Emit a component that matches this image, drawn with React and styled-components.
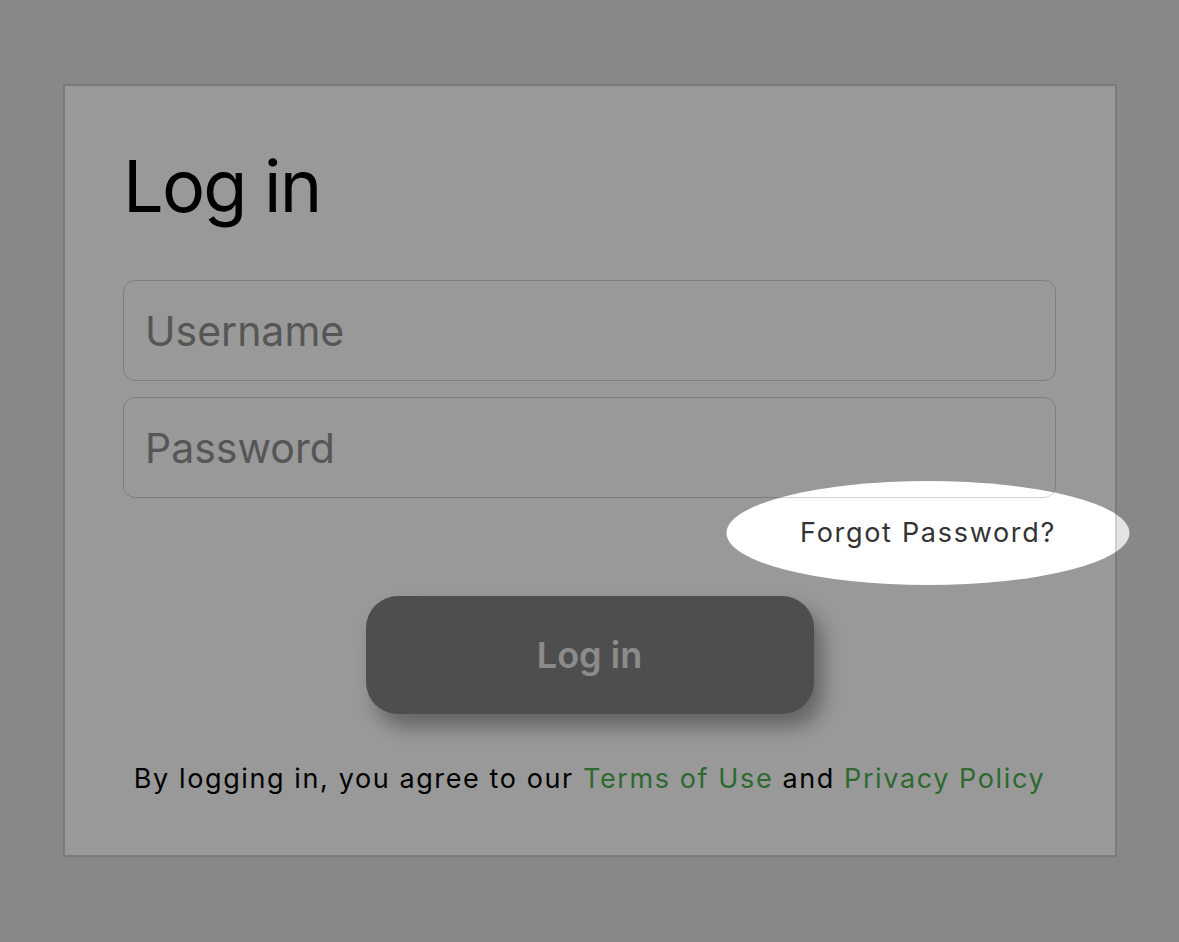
import React from 'react';
import styled, { createGlobalStyle } from 'styled-components';

const GlobalStyle = createGlobalStyle`
  html, body {
    margin: 0;
    padding: 0;
    background-color: #e3e3e3;
    font-family: Inter, "Liberation Sans", sans-serif;
    overflow: hidden;
  }
`;

const Page = styled.div`
  width: 1179px;
  height: 942px;
  padding-top: 84px;
  padding-left: 63px;
  box-sizing: border-box;
`;

const Card = styled.div`
  width: 1054px;
  height: 773px;
  box-sizing: border-box;
  background-color: #ffffff;
  border: 2px solid #cdcdcd;
  padding: 0 59px 0 58px;
  display: flex;
  flex-direction: column;
`;

const Title = styled.h1`
  margin: 64px 0 0;
  font-size: 72px;
  font-weight: 400;
  line-height: 1;
  color: #000;
  letter-spacing: -1.8px;
`;

const Fields = styled.div`
  margin-top: 58px;
  display: flex;
  flex-direction: column;
  gap: 16px;
`;

const Input = styled.input`
  height: 101px;
  box-sizing: border-box;
  border: 1px solid #d2d2d2;
  border-radius: 12px;
  padding: 0 21px;
  font-family: Inter, "Liberation Sans", sans-serif;
  font-size: 41px;
  color: #222;
  background: transparent;
  outline: none;

  &::placeholder {
    color: #909090;
  }
`;

const ForgotRow = styled.div`
  display: flex;
  justify-content: flex-end;
  margin-top: 18px;
`;

const ForgotLink = styled.a`
  position: relative;
  font-size: 27px;
  line-height: 34px;
  letter-spacing: 1.7px;
  color: #333;
  text-decoration: none;

  &::before {
    content: '';
    position: absolute;
    left: 50%;
    top: 50%;
    width: 403px;
    height: 104px;
    transform: translate(-50%, -50%);
    border-radius: 50%;
    box-shadow: 0 0 0 3000px rgba(0, 0, 0, 0.4);
    pointer-events: none;
    z-index: 10;
  }
`;

const LoginButton = styled.button`
  align-self: center;
  margin-top: 46px;
  width: 448px;
  height: 118px;
  border: none;
  border-radius: 32px;
  background-color: #828282;
  color: #e8e8e8;
  font-family: Inter, "Liberation Sans", sans-serif;
  font-size: 36px;
  font-weight: 600;
  box-shadow: 9px 13px 20px rgba(0, 0, 0, 0.35);
  cursor: pointer;
`;

const Terms = styled.p`
  margin: 48px 0 0;
  text-align: center;
  font-size: 27px;
  line-height: 34px;
  letter-spacing: 1.6px;
  color: #000;
`;

const TermsLink = styled.a`
  color: #4caf50;
  text-decoration: none;
`;

export default function App() {
  return (
    <>
      <GlobalStyle />
      <Page>
        <Card>
          <Title>Log in</Title>
          <Fields>
            <Input type="text" placeholder="Username" />
            <Input type="password" placeholder="Password" />
          </Fields>
          <ForgotRow>
            <ForgotLink href="#">Forgot Password?</ForgotLink>
          </ForgotRow>
          <LoginButton>Log in</LoginButton>
          <Terms>
            By logging in, you agree to our <TermsLink href="#">Terms of Use</TermsLink> and{' '}
            <TermsLink href="#">Privacy Policy</TermsLink>
          </Terms>
        </Card>
      </Page>
    </>
  );
}
